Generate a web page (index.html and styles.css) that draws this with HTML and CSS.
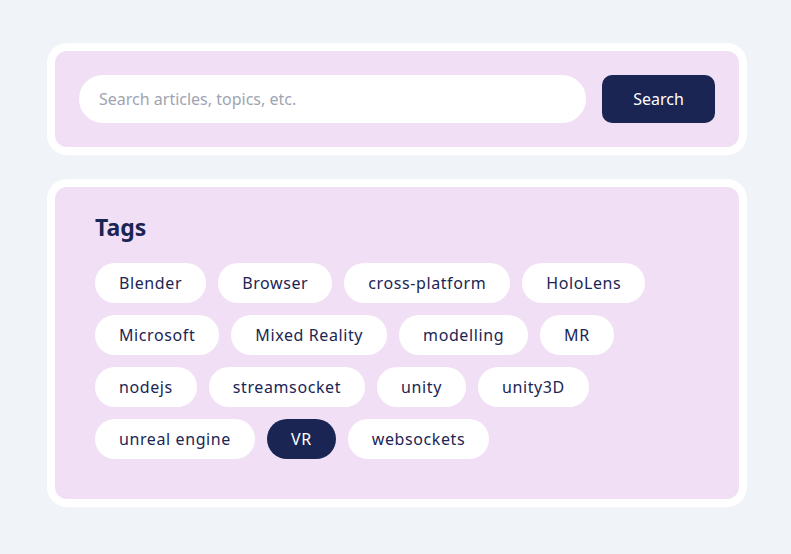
FILE: index.html
```html
<!DOCTYPE html>
<html lang="en">
<head>
<meta charset="utf-8">
<title>Search and Tags</title>
<link rel="stylesheet" href="styles.css">
</head>
<body>
<div class="wrap">
  <section class="card">
    <form class="search">
      <input class="search-input" type="text" placeholder="Search articles, topics, etc.">
      <button class="search-btn" type="button">Search</button>
    </form>
  </section>
  <section class="card tags-card">
    <h2 class="tags-title">Tags</h2>
    <div class="tags">
      <a class="tag">Blender</a>
      <a class="tag">Browser</a>
      <a class="tag">cross-platform</a>
      <a class="tag">HoloLens</a>
      <a class="tag">Microsoft</a>
      <a class="tag">Mixed Reality</a>
      <a class="tag">modelling</a>
      <a class="tag">MR</a>
      <a class="tag">nodejs</a>
      <a class="tag">streamsocket</a>
      <a class="tag">unity</a>
      <a class="tag">unity3D</a>
      <a class="tag">unreal engine</a>
      <a class="tag tag-active">VR</a>
      <a class="tag">websockets</a>
    </div>
  </section>
</div>
</body>
</html>
```

FILE: styles.css
```css
html, body {
  margin: 0;
  padding: 0;
  background: #f0f3f8;
}
body {
  font-family: "Noto Sans", "Open Sans", sans-serif;
  color: #1b2554;
}
.wrap {
  width: 700px;
  margin: 43px 0 0 47px;
  display: flex;
  flex-direction: column;
  gap: 24px;
}
.card {
  background: #f1e0f5;
  border: 8px solid #ffffff;
  border-radius: 20px;
  padding: 24px;
}
.search {
  display: flex;
  gap: 16px;
  margin: 0;
}
.search-input {
  flex: 1;
  height: 48px;
  box-sizing: border-box;
  border: none;
  border-radius: 24px;
  background: #ffffff;
  padding: 0 20px;
  font-family: inherit;
  font-size: 16px;
  color: #1b2554;
  outline: none;
}
.search-input::placeholder {
  color: #a0a4b2;
}
.search-btn {
  width: 113px;
  height: 48px;
  border: none;
  border-radius: 10px;
  background: #1b2554;
  color: #ffffff;
  font-family: inherit;
  font-size: 16px;
}
.tags-card {
  padding: 24px 40px 40px;
}
.tags-title {
  margin: 0 0 20px;
  font-size: 23px;
  line-height: 32px;
  font-weight: 700;
  color: #1b2554;
}
.tags {
  display: flex;
  flex-wrap: wrap;
  gap: 12px;
}
.tag {
  height: 40px;
  line-height: 40px;
  padding: 0 24px;
  border-radius: 20px;
  background: #ffffff;
  font-size: 16px;
  letter-spacing: 0.6px;
  color: #1b2554;
}
.tag-active {
  background: #1b2554;
  color: #ffffff;
}
```
